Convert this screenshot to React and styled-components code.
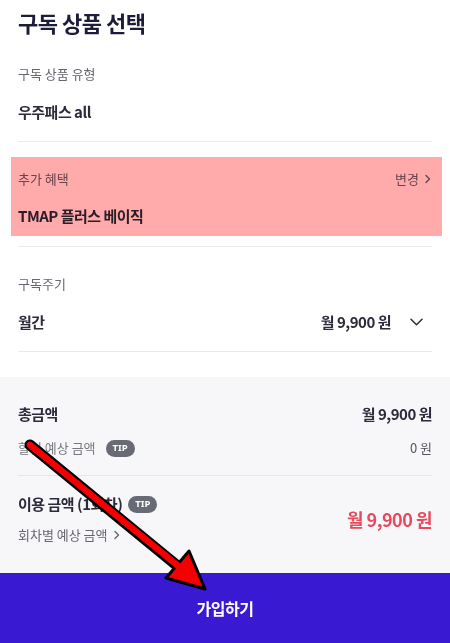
import React from "react";
import styled, { createGlobalStyle } from "styled-components";

const GlobalStyle = createGlobalStyle`
  * { box-sizing: border-box; }
  body {
    margin: 0;
    background: #fff;
    font-family: "Noto Sans CJK KR", "Noto Sans", sans-serif;
    -webkit-font-smoothing: antialiased;
  }
`;

const Page = styled.div`
  position: relative;
  width: 450px;
  height: 100vh;
  min-height: 643px;
  display: flex;
  flex-direction: column;
  overflow: hidden;
`;

const Top = styled.div`
  padding: 0 18px 25px;
`;

const Title = styled.h1`
  margin: 0 0 1px;
  padding-top: 8px;
  font-size: 22px;
  line-height: 28px;
  font-weight: 700;
  letter-spacing: -0.5px;
  color: #1d1d3b;
`;

const Section = styled.div`
  position: relative;
  padding: 27px 0 ${(p) => p.$pb || 18}px;
  border-bottom: 1px solid #e9e9ee;

  &::before {
    content: "";
    display: ${(p) => (p.$highlight ? "block" : "none")};
    position: absolute;
    top: 15px;
    bottom: 10px;
    left: -7px;
    right: -10px;
    background: #ffabab;
    mix-blend-mode: multiply;
    pointer-events: none;
  }
`;

const Row = styled.div`
  display: flex;
  align-items: center;
  justify-content: space-between;
  margin-top: ${(p) => p.$gap || 0}px;
`;

const Label = styled.div`
  font-size: 13px;
  line-height: 20px;
  color: ${(p) => p.$color || "#666670"};
  display: flex;
  align-items: center;
  gap: 4px;
`;

const Value = styled.div`
  font-size: 15px;
  line-height: 22px;
  font-weight: 700;
  letter-spacing: -0.5px;
  color: #2b2b3b;
  display: flex;
  align-items: center;
`;

const Price = styled.span`
  font-size: ${(p) => (p.$big ? 18 : 15)}px;
  line-height: 24px;
  font-weight: 700;
  letter-spacing: -0.5px;
  color: ${(p) => (p.$red ? "#e64a5c" : "#2b2b3b")};
`;

const Summary = styled.div`
  flex: 1;
  background: #f7f7fa;
  padding: 25px 18px 0;
`;

const Block = styled.div`
  padding-bottom: ${(p) => p.$pb || 0}px;
  border-bottom: ${(p) => (p.$line ? "1px solid #e6e6ec" : "none")};
  padding-top: ${(p) => p.$pt || 0}px;
`;

const Tip = styled.span`
  display: inline-flex;
  align-items: center;
  justify-content: center;
  height: 17px;
  padding: 0 7px;
  margin-left: 6px;
  border-radius: 9px;
  background: #686b74;
  color: #fff;
  font-family: "Noto Sans", sans-serif;
  font-size: 9.5px;
  font-weight: 700;
  letter-spacing: 0;
`;

const Split = styled.div`
  display: flex;
  align-items: center;
  justify-content: space-between;
`;

const Stack = styled.div`
  display: flex;
  flex-direction: column;
  gap: 10px;
`;

const Submit = styled.button`
  height: 70px;
  border: none;
  background: #3a19d2;
  color: #fff;
  font-family: inherit;
  font-size: 16px;
  font-weight: 700;
  letter-spacing: -0.5px;
  padding-bottom: 2px;
`;

const Overlay = styled.svg`
  position: absolute;
  top: 0;
  left: 0;
  pointer-events: none;
`;

const Caret = styled.svg`
  margin-left: ${(p) => p.$ml || 0}px;
  margin-right: ${(p) => p.$mr || 0}px;
`;

const ChevronRight = ({ color = "#666670" }) => (
  <Caret width="9" height="10" viewBox="0 0 9 10">
    <path d="M3 1.5 L6.5 5 L3 8.5" fill="none" stroke={color} strokeWidth="1.4" strokeLinecap="round" strokeLinejoin="round" />
  </Caret>
);

const ChevronDown = () => (
  <Caret width="13" height="8" viewBox="0 0 13 8" $ml={19} $mr={9}>
    <path d="M1 1.2 L6.5 6.7 L12 1.2" fill="none" stroke="#2b2b3b" strokeWidth="1.5" strokeLinecap="round" strokeLinejoin="round" />
  </Caret>
);

const Arrow = () => (
  <Overlay width="450" height="643" viewBox="0 0 450 643">
    <line x1="30" y1="445" x2="180" y2="568" stroke="#000" strokeWidth="11" strokeLinecap="round" />
    <polygon points="205,589 166,578 189,551" fill="#f50000" stroke="#000" strokeWidth="3" strokeLinejoin="round" />
    <line x1="30" y1="445" x2="182" y2="569" stroke="#f50000" strokeWidth="6.5" strokeLinecap="round" />
  </Overlay>
);

export default function App() {
  return (
    <>
      <GlobalStyle />
      <Page>
        <Top>
          <Title>구독 상품 선택</Title>
          <Section>
            <Label>구독 상품 유형</Label>
            <Row $gap={17}>
              <Value>우주패스 all</Value>
            </Row>
          </Section>
          <Section $highlight $pb={19}>
            <Row>
              <Label>추가 혜택</Label>
              <Label>
                변경 <ChevronRight />
              </Label>
            </Row>
            <Row $gap={16}>
              <Value>TMAP 플러스 베이직</Value>
            </Row>
          </Section>
          <Section>
            <Label>구독주기</Label>
            <Row $gap={17}>
              <Value>월간</Value>
              <Value>
                월 9,900 원
                <ChevronDown />
              </Value>
            </Row>
          </Section>
        </Top>
        <Summary>
          <Block $line $pb={17}>
            <Row>
              <Value>총금액</Value>
              <Price>월 9,900 원</Price>
            </Row>
            <Row $gap={12}>
              <Label $color="#77777f">
                할인 예상 금액 <Tip>TIP</Tip>
              </Label>
              <Label $color="#555560">0 원</Label>
            </Row>
          </Block>
          <Block $pt={17}>
            <Split>
              <Stack>
                <Value>
                  이용 금액 (1회차) <Tip>TIP</Tip>
                </Value>
                <Label>
                  회차별 예상 금액 <ChevronRight />
                </Label>
              </Stack>
              <Price $big $red>월 9,900 원</Price>
            </Split>
          </Block>
        </Summary>
        <Submit>가입하기</Submit>
        <Arrow />
      </Page>
    </>
  );
}
